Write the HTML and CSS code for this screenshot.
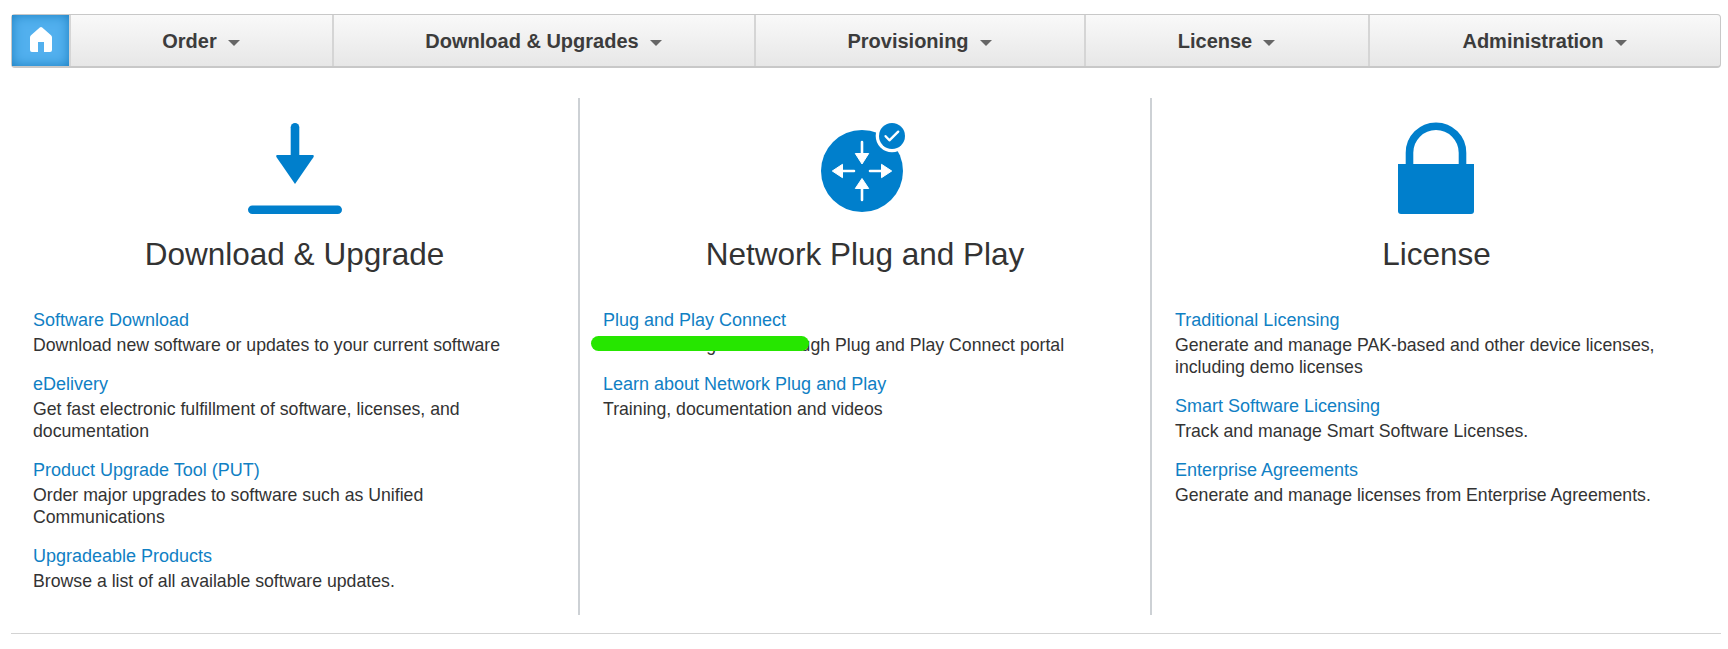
FILE: index.html
```html
<!DOCTYPE html>
<html lang="en">
<head>
<meta charset="utf-8">
<title>Software Central</title>
<link rel="stylesheet" href="styles.css">
</head>
<body>
<nav class="nav">
  <a class="nav-home" aria-label="Home"><svg width="22" height="25" viewBox="0 0 22 25"><path fill="#fff" d="M9.800.5Q11-.4 12.200.5L21 8.300Q22 9.200 22 10.500V23Q22 25 20 25H14V15H8V25H2Q0 25 0 23V10.500Q0 9.200 1 8.300Z"/></svg></a>
  <a class="nav-item nav-order">Order<span class="caret"></span></a>
  <a class="nav-item nav-download">Download &amp; Upgrades<span class="caret"></span></a>
  <a class="nav-item nav-provisioning">Provisioning<span class="caret"></span></a>
  <a class="nav-item nav-license">License<span class="caret"></span></a>
  <a class="nav-item nav-admin">Administration<span class="caret"></span></a>
</nav>
<main class="columns">
  <section class="column">
    <svg class="icon" width="96" height="96" viewBox="0 0 96 96" fill="#007fcc">
      <rect x="43.700" y="5" width="8.600" height="40" rx="4.300"/>
      <path d="M30 37H66Q67.500 37.500 66.600 39L48 66L29.400 39Q28.500 37.500 30 37Z"/>
      <rect x="1" y="87.400" width="94" height="8.600" rx="4.300"/>
    </svg>
    <h2>Download &amp; Upgrade</h2>
    <dl>
      <dt><a>Software Download</a></dt>
      <dd>Download new software or updates to your current software</dd>
      <dt><a>eDelivery</a></dt>
      <dd>Get fast electronic fulfillment of software, licenses, and<br>documentation</dd>
      <dt><a>Product Upgrade Tool (PUT)</a></dt>
      <dd>Order major upgrades to software such as Unified<br>Communications</dd>
      <dt><a>Upgradeable Products</a></dt>
      <dd>Browse a list of all available software updates.</dd>
    </dl>
  </section>
  <section class="column">
    <svg class="icon" width="96" height="96" viewBox="-1 0 96 96">
      <circle cx="44" cy="53" r="41" fill="#007fcc"/>
      <circle cx="74" cy="18" r="16.300" fill="#fff"/>
      <circle cx="74" cy="18" r="13" fill="#007fcc"/>
      <path d="M67.600 18.200L71.400 22.300L80.200 13.700" fill="none" stroke="#fff" stroke-width="2.400" stroke-linecap="round" stroke-linejoin="round"/>
      <g stroke="#fff" stroke-width="2.600" stroke-linecap="round"><path d="M44 24V36M44 82V70M22 53H36M52 53H66"/></g>
      <path fill="#fff" stroke="#fff" stroke-linejoin="round" d="M37.300 35.500H50.700L44 46ZM37.300 70.500H50.700L44 60.500ZM24.500 46.300V59.700L14.300 53ZM63.500 46.300V59.700L73.700 53Z"/>
    </svg>
    <h2>Network Plug and Play</h2>
    <dl>
      <dt><a>Plug and Play Connect</a></dt>
      <dd class="marked">Device management through Plug and Play Connect portal</dd>
      <dt><a>Learn about Network Plug and Play</a></dt>
      <dd>Training, documentation and videos</dd>
    </dl>
  </section>
  <section class="column">
    <svg class="icon" width="96" height="96" viewBox="1 0 96 96">
      <path d="M21.500 50V34.700A26.500 26.500 0 0 1 74.500 34.700V50" fill="none" stroke="#007fcc" stroke-width="7.600"/>
      <path d="M10 46H86V93Q86 96 83 96H13Q10 96 10 93Z" fill="#007fcc"/>
    </svg>
    <h2>License</h2>
    <dl>
      <dt><a>Traditional Licensing</a></dt>
      <dd>Generate and manage PAK-based and other device licenses,<br>including demo licenses</dd>
      <dt><a>Smart Software Licensing</a></dt>
      <dd>Track and manage Smart Software Licenses.</dd>
      <dt><a>Enterprise Agreements</a></dt>
      <dd>Generate and manage licenses from Enterprise Agreements.</dd>
    </dl>
  </section>
</main>
</body>
</html>
```
FILE: styles.css
```css
* { box-sizing: border-box; }
body {
  margin: 0;
  padding: 14px 7px 0 11px;
  background: #fff;
  color: #333;
  font-family: "Liberation Sans", Arial, sans-serif;
  font-size: 18px;
  line-height: 22px;
}
.nav {
  display: flex;
  height: 54px;
  width: 1710px;
  border: 1px solid #c8c8c8;
  border-bottom-width: 2px;
  border-radius: 4px;
  background: linear-gradient(#f9f9f9, #e7e7e7);
  font-size: 20px;
  font-weight: bold;
  color: #3c3c3c;
}
.nav-home {
  width: 57px;
  display: flex;
  align-items: center;
  justify-content: center;
  padding-bottom: 2px;
  background: #52b0ee;
  box-shadow: inset 0 0 12px #1c7fc0;
}
.nav-item {
  display: flex;
  align-items: center;
  justify-content: center;
  border-left: 2px solid #d5d5d5;
  padding: 1px 1px 0 0;
}
.nav-order { width: 263px; }
.nav-download { width: 422px; }
.nav-provisioning { width: 330px; }
.nav-license { width: 284px; }
.nav-admin { flex: 1; }
.caret {
  margin: 3px 0 0 11px;
  border: 6px solid transparent;
  border-top-color: #666;
  border-bottom: 0;
}
.columns {
  display: grid;
  grid-template-columns: 567px 572px 571px;
  width: 1710px;
  height: 566px;
  padding: 30px 0 18px;
  border-bottom: 1px solid #d3d3d3;
}
.column {
  padding: 20px 22px 0;
  text-align: center;
}
.column + .column {
  border-left: 2px solid #cdd1d5;
  padding: 20px 23px 0;
}
.icon { display: block; margin: 0 auto; }
h2 {
  margin: 21px 0 36px;
  font-size: 31.5px;
  line-height: 38px;
  font-weight: normal;
}
dl { margin: 0; text-align: left; white-space: nowrap; }
dt { margin-bottom: 3px; color: #1080c4; }
dd { margin: 0 0 17px; font-size: 17.7px; }
.marked { position: relative; }
.marked::before {
  content: "";
  position: absolute;
  left: -12px;
  top: 2px;
  width: 218px;
  height: 15px;
  border-radius: 8px;
  background: #26e600;
}
```
